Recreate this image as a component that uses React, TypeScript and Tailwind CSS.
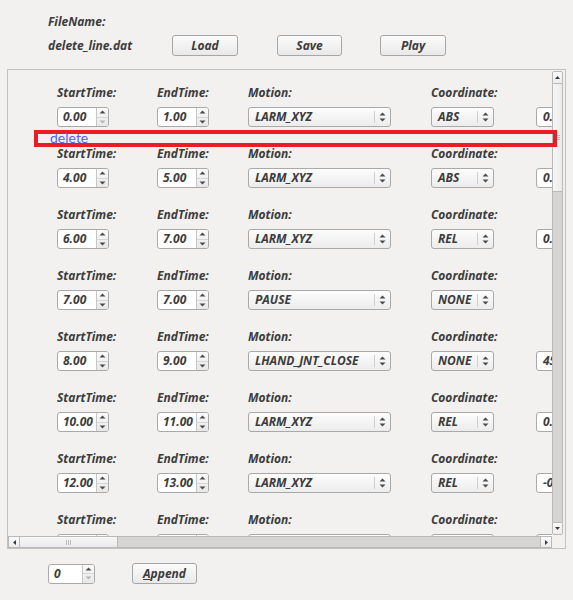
import React from 'react';

type Row = { s: string; e: string; m: string; c: string; v?: string; downOff?: boolean };

const ROWS: Row[] = [
  { s: '0.00', e: '1.00', m: 'LARM_XYZ', c: 'ABS', v: '0.', downOff: true },
  { s: '4.00', e: '5.00', m: 'LARM_XYZ', c: 'ABS', v: '0.' },
  { s: '6.00', e: '7.00', m: 'LARM_XYZ', c: 'REL', v: '0.' },
  { s: '7.00', e: '7.00', m: 'PAUSE', c: 'NONE' },
  { s: '8.00', e: '9.00', m: 'LHAND_JNT_CLOSE', c: 'NONE', v: '45' },
  { s: '10.00', e: '11.00', m: 'LARM_XYZ', c: 'REL', v: '0.' },
  { s: '12.00', e: '13.00', m: 'LARM_XYZ', c: 'REL', v: '-0' },
  { s: '14.00', e: '15.00', m: 'LARM_XYZ', c: 'REL', v: '0.' },
];

function Tri({ up, light }: { up?: boolean; light?: boolean }) {
  return (
    <svg width="7" height="4" viewBox="0 0 7 4">
      <path d={up ? 'M0.5 3.5 L3.5 0.5 L6.5 3.5 Z' : 'M0.5 0.5 L3.5 3.5 L6.5 0.5 Z'} fill={light ? '#b4b4b4' : '#4a4a4a'} />
    </svg>
  );
}

function Spin({ value, className, downOff }: { value: string; className: string; downOff?: boolean }) {
  return (
    <div className={`flex h-[20px] rounded-[3px] border border-[#a9a9a9] bg-white overflow-hidden ${className}`}>
      <div className="flex-1 pl-[5px] leading-[18px] whitespace-nowrap overflow-hidden">{value}</div>
      <div className="w-[12px] shrink-0 flex flex-col border-l border-[#c6c6c6] bg-linear-to-b from-[#fbfbfb] to-[#e8e8e8]">
        <div className="flex-1 flex items-center justify-center border-b border-[#d6d6d6]">
          <Tri up />
        </div>
        <div className="flex-1 flex items-center justify-center">
          <Tri light={downOff} />
        </div>
      </div>
    </div>
  );
}

function Combo({ value, className }: { value: string; className: string }) {
  return (
    <div className={`flex items-center h-[20px] rounded-[3px] border border-[#a9a9a9] bg-linear-to-b from-[#fdfdfd] to-[#ececec] ${className}`}>
      <div className="flex-1 pl-[6px] leading-[18px] whitespace-nowrap">{value}</div>
      <div className="w-px h-[12px] bg-[#cfcfcf]" />
      <div className="w-[15px] flex flex-col items-center justify-center gap-[2px]">
        <Tri up />
        <Tri />
      </div>
    </div>
  );
}

function Button({ children, className }: { children: React.ReactNode; className: string }) {
  return (
    <div className={`h-[21px] rounded-[3px] border border-[#a6a6a6] bg-linear-to-b from-[#fbfbfb] to-[#e9e9e9] flex items-center justify-center ${className}`}>
      {children}
    </div>
  );
}

function ArrowBox({ dir, className }: { dir: 'up' | 'down' | 'left' | 'right'; className: string }) {
  const d = {
    up: 'M1 4 L3.5 1 L6 4 Z',
    down: 'M1 1 L3.5 4 L6 1 Z',
    left: 'M4 1 L1 3.5 L4 6 Z',
    right: 'M1 1 L4 3.5 L1 6 Z',
  }[dir];
  const vert = dir === 'up' || dir === 'down';
  return (
    <div className={`flex items-center justify-center bg-linear-to-b from-[#fafafa] to-[#ececec] border-[#b9b9b9] ${className}`}>
      <svg width={vert ? 7 : 5} height={vert ? 5 : 7} viewBox={vert ? '0 0 7 5' : '0 0 5 7'}>
        <path d={d} fill="#3a3a3a" />
      </svg>
    </div>
  );
}

export default function App() {
  return (
    <div className="relative w-[573px] h-[600px] bg-[#f2f1f0] text-[#3c3c3c] font-['Open_Sans',sans-serif] font-bold italic text-[12px] overflow-hidden">
      {/* Header */}
      <div className="pl-[48px] pt-[14px] leading-[16px]">FileName:</div>
      <div className="flex items-center pl-[48px] mt-[5px]">
        <div className="w-[124px]">delete_line.dat</div>
        <Button className="w-[66px]">Load</Button>
        <Button className="w-[65px] ml-[39px]">Save</Button>
        <Button className="w-[66px] ml-[38px]">Play</Button>
      </div>

      {/* Scroll area */}
      <div className="ml-[7px] mt-[13px] w-[559px] border border-[#c2c1bf] pr-[2px] grid grid-cols-[544px_11px] grid-rows-[466px_12px]">
        <div className="overflow-hidden pt-[15px] pl-[49px]">
          {ROWS.map((r, i) => (
            <div key={i} className="h-[61px] flex">
              <div className="w-[100px] shrink-0">
                <div className="leading-[16px]">StartTime:</div>
                <Spin value={r.s} className="w-[52px] mt-[6px]" downOff={r.downOff} />
              </div>
              <div className="w-[91px] shrink-0">
                <div className="leading-[16px]">EndTime:</div>
                <Spin value={r.e} className="w-[52px] mt-[6px]" />
              </div>
              <div className="w-[183px] shrink-0">
                <div className="leading-[16px]">Motion:</div>
                <Combo value={r.m} className="w-[143px] mt-[6px]" />
              </div>
              <div className="w-[105px] shrink-0">
                <div className="leading-[16px]">Coordinate:</div>
                <Combo value={r.c} className="w-[63px] mt-[6px]" />
              </div>
              {r.v && (
                <div className="w-[60px] shrink-0 pt-[22px]">
                  <div className="h-[20px] rounded-[3px] border border-[#a9a9a9] bg-white pl-[6px] leading-[18px]">{r.v}</div>
                </div>
              )}
            </div>
          ))}
        </div>

        {/* vertical scrollbar */}
        <div className="flex flex-col py-[1px]">
          <ArrowBox dir="up" className="h-[13px] border rounded-t-[2px]" />
          <div className="h-[108px] border-x border-b border-[#b9b9b9] bg-linear-to-r from-[#f6f6f6] to-[#ebebeb] flex flex-col items-center justify-center gap-[1px]">
            <div className="w-[5px] h-px bg-[#bcbcbc]" />
            <div className="w-[5px] h-px bg-[#bcbcbc]" />
            <div className="w-[5px] h-px bg-[#bcbcbc]" />
          </div>
          <div className="flex-1 border-x border-[#b9b9b9] bg-[#d6d5d3]" />
          <ArrowBox dir="down" className="h-[13px] border rounded-b-[2px]" />
        </div>

        {/* horizontal scrollbar */}
        <div className="flex">
          <ArrowBox dir="left" className="w-[12px] border" />
          <div className="w-[98px] border-y border-r border-[#b9b9b9] bg-linear-to-b from-[#f6f6f6] to-[#ebebeb] flex items-center justify-center gap-[1px]">
            <div className="w-px h-[5px] bg-[#bcbcbc]" />
            <div className="w-px h-[5px] bg-[#bcbcbc]" />
            <div className="w-px h-[5px] bg-[#bcbcbc]" />
          </div>
          <div className="flex-1 border-y border-[#b9b9b9] bg-[#d6d5d3]" />
          <ArrowBox dir="right" className="w-[12px] border" />
        </div>
        <div />
      </div>

      {/* Bottom */}
      <div className="flex items-center pl-[48px] mt-[14px]">
        <Spin value="0" className="w-[47px]" downOff />
        <Button className="w-[65px] ml-[37px]">
          <span><span className="underline">A</span>ppend</span>
        </Button>
      </div>

      {/* delete overlay */}
      <div className="absolute left-[34px] top-[130px] w-[523px] h-[17px] border-[4px] border-[#ec1c24]">
        <span className="absolute left-[12px] top-[-4px] font-['Lato',sans-serif] font-normal not-italic text-[14px] leading-[16px] text-[#5c5cf2]">delete</span>
      </div>
    </div>
  );
}
